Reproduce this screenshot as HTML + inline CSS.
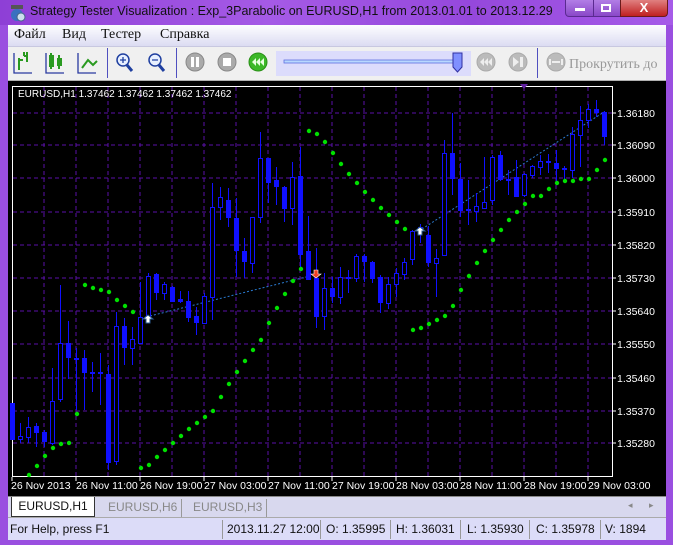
<!DOCTYPE html><html><head><meta charset="utf-8"><style>
*{margin:0;padding:0;box-sizing:border-box}
body{width:673px;height:545px;overflow:hidden;background:#9a4fe0;font-family:"Liberation Sans",sans-serif;position:relative}
.abs{position:absolute}
.title{left:0;top:0;width:673px;height:25px;background:linear-gradient(90deg,#8e3fd6,#a55ae6 40%,#9548dc 70%,#a65be8);}
.ttext{left:30px;top:4px;font-size:12.5px;color:#111;white-space:nowrap}
.menu{left:8px;top:25px;width:658px;height:21px;background:linear-gradient(#fdfdff,#dcdcf2);font-family:"Liberation Serif",serif;font-size:14px;color:#111}
.menu span{position:absolute;top:2px}
.tool{left:8px;top:46px;width:658px;height:35px;background:#f0f0f0;border-top:1px solid #c8c8e0;border-bottom:1px solid #b0b0b0}
.chart{left:8px;top:81px;width:658px;height:415px;background:#000}
.tabs{left:8px;top:496px;width:658px;height:21px;background:#d8d8ee;border-top:1px solid #888;font-size:12px;color:#888}
.status{left:8px;top:517px;width:658px;height:23px;background:#dcdcf8;border-top:1px solid #aaa;font-size:12px;color:#111}
.status span{position:absolute;top:4px;white-space:nowrap}
.sep{position:absolute;top:2px;width:1px;height:19px;background:#999}
</style></head><body>
<div class="abs title"></div>
<svg class="abs" style="left:8px;top:3px" width="20" height="20"><circle cx="9" cy="12" r="6" fill="#3a70c0"/><rect x="3" y="2" width="12" height="4" fill="#555"/><circle cx="13" cy="14" r="4" fill="#cde" stroke="#468" /></svg>
<div class="abs ttext">Strategy Tester Visualization : Exp_3Parabolic on EURUSD,H1 from 2013.01.01 to 2013.12.29</div>
<div class="abs" style="left:565px;top:0;width:56px;height:17px;background:linear-gradient(#b27ee6,#8a48c8);border:1px solid #5a2a90;border-top:none;border-radius:0 0 0 4px"></div>
<div class="abs" style="left:593px;top:0;width:1px;height:17px;background:#5a2a90"></div>
<div class="abs" style="left:575px;top:8px;width:10px;height:3px;background:#fff"></div>
<div class="abs" style="left:601px;top:4px;width:10px;height:8px;border:2px solid #fff"></div>
<div class="abs" style="left:620px;top:0;width:48px;height:17px;background:linear-gradient(#e08080,#c02020);border:1px solid #6a1a1a;border-top:none;border-radius:0 0 4px 0;color:#fff;font-weight:bold;font-size:13px;text-align:center;line-height:15px">X</div>
<div class="abs menu"><span style="left:6px">Файл</span><span style="left:54px">Вид</span><span style="left:93px">Тестер</span><span style="left:152px">Справка</span></div>
<div class="abs tool"></div>
<svg class="abs" style="left:8px;top:46px" width="658" height="35">
<g stroke="#2a3aa0" stroke-width="1.3" fill="none"><path d="M6 7v20h18M38 7v20h18M70 7v20h18"/></g>
<g stroke="#2a9a20" stroke-width="2" fill="none"><path d="M11 24v-12M16 10v-4M16 10h3M12 14h3M19 6v10"/><rect x="42" y="10" width="3" height="10"/><rect x="50" y="13" width="3" height="6"/><path d="M43 7v16M51 9v14M74 22l6-8 5 5 4-4"/></g>
<rect x="99" y="2" width="1" height="30" fill="#5050c0"/><rect x="168" y="2" width="1" height="30" fill="#5050c0"/><rect x="529" y="2" width="1" height="30" fill="#5050c0"/>
<g fill="#e8f0ff" stroke="#2040a0" stroke-width="1.5"><circle cx="115" cy="14" r="6"/><circle cx="147" cy="14" r="6"/></g>
<path d="M119 19l5 6M151 19l5 6" stroke="#2040a0" stroke-width="3"/>
<path d="M112 14h6M115 11v6M144 14h6" stroke="#2040a0" stroke-width="1.3"/>
<circle cx="187" cy="16" r="9" fill="#aaa" stroke="#888"/><rect x="183" y="11" width="3" height="10" fill="#fff"/><rect x="188" y="11" width="3" height="10" fill="#fff"/>
<circle cx="219" cy="16" r="9" fill="#aaa" stroke="#888"/><rect x="215" y="12" width="8" height="8" fill="#fff"/>
<circle cx="250" cy="16" r="9" fill="#3cb828" stroke="#2a9018"/><path d="M244 16l4-4v8zM248 16l4-4v8zM252 16l4-4v8z" fill="#e8ffe0"/>
<rect x="268" y="5" width="195" height="25" fill="#dcdcfc"/>
<rect x="276" y="14" width="176" height="3" fill="#b8d8ff" stroke="#6070e0" stroke-width="0.8"/>
<path d="M445 7h9v14l-4.5 5-4.5-5z" fill="#8090ff" stroke="#3030a0"/>
<circle cx="478" cy="16" r="9" fill="#bbb" stroke="#aaa"/><path d="M472 16l4-4v8zM476 16l4-4v8zM480 16l4-4v8z" fill="#eee"/>
<circle cx="510" cy="16" r="9" fill="#bbb" stroke="#aaa"/><path d="M505 11l6 5-6 5z M512 11h3v10h-3z" fill="#eee"/>
<circle cx="548" cy="16" r="9" fill="#bbb" stroke="#aaa"/><path d="M542 13v6M554 13v6M544 16h8" stroke="#eee" stroke-width="2"/>
<text x="561" y="22" font-family="Liberation Serif,serif" font-size="14" fill="#999">Прокрутить до</text>
</svg>
<div class="abs chart"></div>
<svg class="abs" style="left:0;top:0" width="673" height="545">
<g stroke="#5a10a8" stroke-dasharray="4,3" stroke-width="1">
<path d="M44 87V476M76 87V476M108 87V476M140 87V476M172 87V476M204 87V476M236 87V476M268 87V476M300 87V476M332 87V476M364 87V476M396 87V476M428 87V476M460 87V476M492 87V476M524 87V476M556 87V476M588 87V476"/>
<path d="M13 113H612M13 145H612M13 178H612M13 212H612M13 245H612M13 278H612M13 311H612M13 344H612M13 378H612M13 411H612M13 443H612"/>
</g>
<rect x="12.5" y="86.5" width="600" height="390" fill="none" stroke="#fff"/>
<path d="M520 84h8l-4 5z" fill="#6020a0"/>
<text x="18" y="97" font-size="10" fill="#fff">EURUSD,H1  1.37462 1.37462 1.37462 1.37462</text>
<g font-size="10.5" fill="#fff">
<text x="617" y="117">1.36180</text><text x="617" y="149">1.36090</text><text x="617" y="182">1.36000</text><text x="617" y="216">1.35910</text><text x="617" y="249">1.35820</text><text x="617" y="282">1.35730</text><text x="617" y="315">1.35640</text><text x="617" y="348">1.35550</text><text x="617" y="382">1.35460</text><text x="617" y="415">1.35370</text><text x="617" y="447">1.35280</text>
</g>
<path d="M613 113h3M613 145h3M613 178h3M613 212h3M613 245h3M613 278h3M613 311h3M613 344h3M613 378h3M613 411h3M613 443h3M12 477v4M76 477v4M140 477v4M204 477v4M268 477v4M332 477v4M396 477v4M460 477v4M524 477v4M588 477v4" stroke="#fff"/>
<g font-size="10.5" fill="#fff" textLength="60"><text x="11" y="489">26 Nov 2013</text><text x="76" y="489">26 Nov 11:00</text><text x="140" y="489">26 Nov 19:00</text><text x="204" y="489">27 Nov 03:00</text><text x="268" y="489">27 Nov 11:00</text><text x="332" y="489">27 Nov 19:00</text><text x="396" y="489">28 Nov 03:00</text><text x="460" y="489">28 Nov 11:00</text><text x="524" y="489">28 Nov 19:00</text><text x="588" y="489">29 Nov 03:00</text></g>
<path d="M150 316L310 276M422 229L604 112" stroke="#2a7ad0" stroke-dasharray="2,2" fill="none"/>
<g id="c" stroke="#1010ff" fill="#1010ff"></g>
<g id="d" fill="#00e000"></g>
<path d="M148 315l-5 4h3v4h4v-4h3z" fill="#fff" stroke="#2a5a90"/>
<path d="M420 227l-5 4h3v4h4v-4h3z" fill="#fff" stroke="#2a5a90"/>
<path d="M316 278l-5-4h3v-4h4v4h3z" fill="#f04020" stroke="#fff" stroke-width=".6"/>
</svg>
<div class="abs tabs">
<div class="abs" style="left:3px;top:0;width:84px;height:20px;background:#fff;border:1px solid #333;border-top:none;color:#111;text-align:center;line-height:19px">EURUSD,H1</div>
<span class="abs" style="left:100px;top:3px">EURUSD,H6</span><div class="sep" style="left:173px"></div>
<span class="abs" style="left:185px;top:3px">EURUSD,H3</span><div class="sep" style="left:258px"></div>
<span class="abs" style="left:620px;top:3px;font-size:9px">◂</span><span class="abs" style="left:641px;top:3px;font-size:9px">▸</span>
</div>
<div class="abs status"><span style="left:2px">For Help, press F1</span>
<div class="sep" style="left:214px"></div><span style="left:219px">2013.11.27 12:00</span>
<div class="sep" style="left:312px"></div><span style="left:318px">O: 1.35995</span>
<div class="sep" style="left:382px"></div><span style="left:388px">H: 1.36031</span>
<div class="sep" style="left:452px"></div><span style="left:459px">L: 1.35930</span>
<div class="sep" style="left:521px"></div><span style="left:528px">C: 1.35978</span>
<div class="sep" style="left:592px"></div><span style="left:597px">V: 1894</span></div>
<script>
var C=[[12,403,403,440,440,1],[20,423,436,439,443,0],[28,417,427,437,443,0],[36,423,426,433,447,1],[44,430,432,442,447,1],[52,368,401,443,445,0],[60,285,343,399,402,0],[68,321,343,358,379,1],[76,348,358,360,410,1],[84,350,358,373,410,1],[92,362,372,374,392,1],[100,353,372,374,405,1],[108,365,374,463,470,1],[116,312,326,461,465,0],[124,318,326,348,365,1],[132,327,339,348,365,0],[140,282,317,343,343,0],[148,273,276,317,317,0],[156,273,274,293,300,1],[164,282,284,293,300,0],[172,286,287,302,302,1],[180,291,299,302,303,1],[188,291,301,318,322,1],[196,307,316,323,335,1],[204,293,296,323,323,0],[212,183,207,297,320,0],[220,187,197,207,220,0],[228,188,200,218,227,1],[236,198,218,251,277,1],[244,238,251,262,278,1],[252,217,217,263,273,0],[260,132,158,217,223,0],[268,158,158,183,203,1],[276,167,180,187,205,1],[284,186,187,209,222,1],[292,162,177,208,225,0],[300,147,176,255,267,1],[308,216,251,280,280,1],[316,248,278,317,328,1],[324,273,288,316,330,0],[332,277,288,297,303,1],[340,267,277,297,304,0],[348,270,277,279,293,1],[356,254,256,278,282,0],[364,254,256,262,282,1],[372,261,262,279,283,1],[380,275,277,303,313,1],[388,277,284,303,309,0],[396,268,273,284,297,0],[404,258,262,274,280,0],[412,230,231,259,265,0],[420,224,227,229,243,1],[428,226,235,263,267,1],[436,249,258,263,297,0],[444,140,153,255,256,0],[452,113,153,179,195,1],[460,163,179,211,217,1],[468,180,209,211,225,1],[476,193,206,211,222,0],[484,157,202,208,208,0],[492,155,157,200,205,0],[500,151,155,180,181,1],[508,170,179,181,195,1],[516,160,177,197,197,1],[524,173,174,195,197,0],[532,165,166,175,178,0],[540,155,161,167,175,0],[548,154,161,163,173,1],[556,150,163,169,182,1],[564,166,168,170,180,1],[572,127,134,170,178,0],[580,106,120,135,167,0],[588,104,109,120,128,0],[596,100,109,113,117,1],[604,111,112,137,145,1]];
var s='';
C.forEach(function(c){var x=c[0];s+='<line x1="'+(x+.5)+'" y1="'+c[1]+'" x2="'+(x+.5)+'" y2="'+c[4]+'" stroke-width="1"/>';
var h=Math.max(c[3]-c[2],1);
if(c[5])s+='<rect x="'+(x-2)+'" y="'+c[2]+'" width="5" height="'+h+'" stroke="none"/>';
else s+='<rect x="'+(x-1.5)+'" y="'+(c[2]+.5)+'" width="4" height="'+h+'" fill="#000" stroke-width="1"/>';});
document.getElementById('c').innerHTML=s;
var D=[[29,475],[37,466],[45,456],[53,448],[61,444],[69,443],[77,414],[85,285],[93,288],[101,290],[109,292],[117,300],[125,306],[133,312],[141,468],[149,465],[157,457],[165,450],[173,443],[181,436],[189,429],[197,423],[205,417],[213,411],[221,397],[229,384],[237,372],[245,361],[253,350],[261,340],[269,323],[277,308],[285,294],[293,281],[301,269],[309,131],[317,134],[325,142],[333,153],[341,164],[349,174],[357,183],[365,192],[373,200],[381,208],[389,215],[397,222],[405,229],[413,330],[421,328],[429,324],[437,320],[445,316],[453,306],[461,290],[469,276],[477,263],[485,251],[493,240],[501,230],[509,220],[517,212],[525,204],[533,196],[541,196],[549,189],[557,183],[565,181],[573,181],[581,179],[589,179],[597,170],[605,160]];
var t='';D.forEach(function(d){t+='<circle cx="'+d[0]+'" cy="'+d[1]+'" r="2.2"/>';});
document.getElementById('d').innerHTML=t;
</script>
</body></html>
